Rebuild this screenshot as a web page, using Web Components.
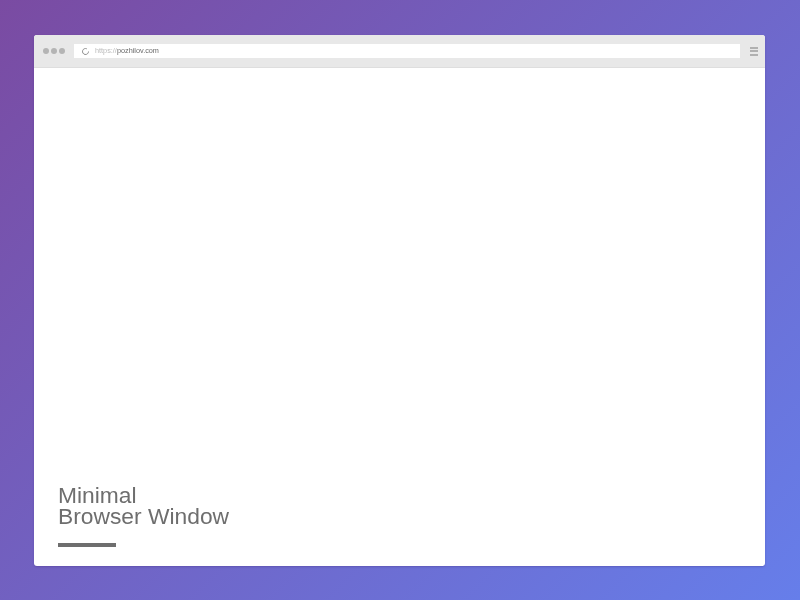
<!DOCTYPE html>
<html><head><meta charset="utf-8"><style>
html,body{margin:0;height:100%}
body{width:800px;height:600px;overflow:hidden;background:linear-gradient(135deg,#7a4ba2 0%,#667eea 100%);display:flex;padding:35px 35px 34px 34px;box-sizing:border-box}
</style></head><body>
<browser-window url-scheme="https://" url-host="pozhilov.com">
<span>Minimal<br>Browser Window</span>
</browser-window>
<script>
customElements.define('address-bar',class extends HTMLElement{constructor(){super();const s=this.attachShadow({mode:'open'});s.innerHTML=`<style>
:host{display:flex;flex:1;align-items:center;height:14px;background:#fff;padding-left:8px;font:7.3px/14px "Liberation Sans",Arial,sans-serif;color:#6a6a6a;gap:6px}
svg{display:block;flex:none}
.t{will-change:transform}
.s{color:#bbb}
</style><svg width="7" height="7" viewBox="0 0 7 7" fill="none" stroke="#8c8c8c" stroke-width="1"><path d="M4.8 .8A3 3 0 1 0 6.5 3.5"/></svg><div class="t"><span class="s">${this.getAttribute('scheme')}</span>${this.getAttribute('host')}</div>`}});
customElements.define('browser-window',class extends HTMLElement{constructor(){super();const s=this.attachShadow({mode:'open'});s.innerHTML=`<style>
:host{display:flex;flex-direction:column;flex:1;background:#fff;border-radius:3px;overflow:hidden;box-shadow:0 1px 2px rgba(60,40,120,.3)}
.bar{display:flex;align-items:center;height:33px;flex:none;box-sizing:border-box;background:#e8e8e8;border-bottom:1px solid #dedede;padding:0 7px 0 9px}
.dots{display:flex;gap:2px;margin-right:9px}
.dots i{width:6px;height:6px;border-radius:50%;background:#b4b4b4}
.menu{display:flex;flex-direction:column;gap:1.5px;margin-left:10px;width:8px}
.menu i{height:2px;background:#b0b0b0}
main{flex:1;display:flex;flex-direction:column;justify-content:flex-end;padding:0 24px 19px}
h1{margin:0;font:400 22.8px/21px "Liberation Sans",Arial,sans-serif;color:#6e6e6e;will-change:transform}
.rule{width:57.5px;height:4px;background:#6e6e6e;margin-top:16px}
</style><div class="bar"><div class="dots"><i></i><i></i><i></i></div><address-bar scheme="${this.getAttribute('url-scheme')}" host="${this.getAttribute('url-host')}"></address-bar><div class="menu"><i></i><i></i><i></i></div></div><main><h1><slot></slot></h1><div class="rule"></div></main>`}});
</script></body></html>
